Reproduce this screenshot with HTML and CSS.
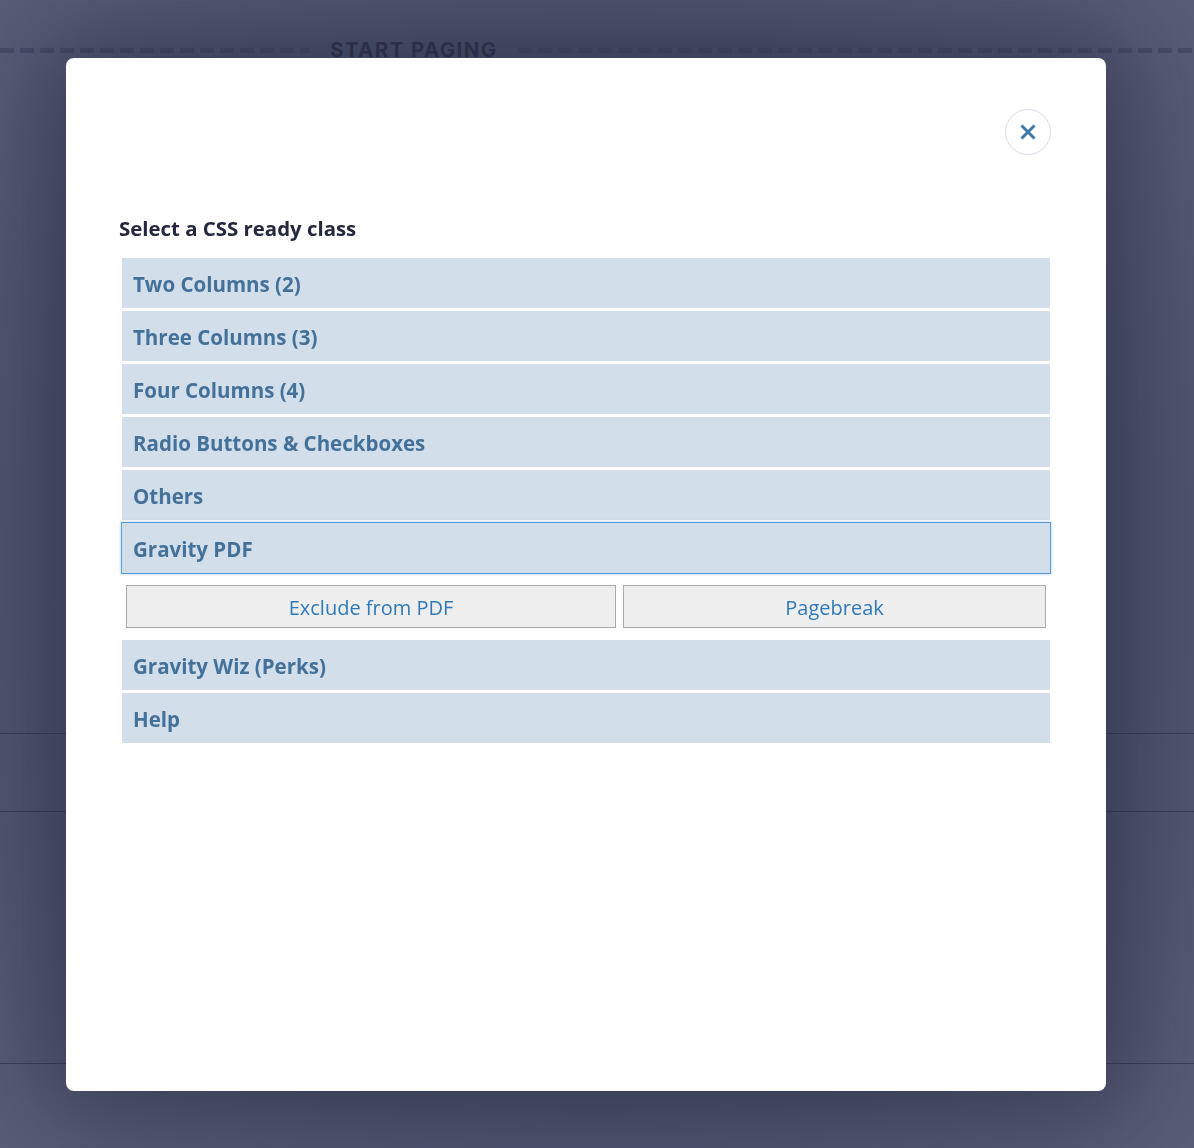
FILE: index.html
```html
<!DOCTYPE html>
<html lang="en">
<head>
    <meta charset="UTF-8">
    <meta name="viewport" content="width=device-width, initial-scale=1.0">
    <title>CSS Ready Classes</title>
    <link rel="stylesheet" href="styles.css">
</head>
<body>
    <div class="editor">
        <div class="page-break">
            <span class="page-break-line"></span>
            <span class="page-break-label">START PAGING</span>
            <span class="page-break-line"></span>
        </div>
        <div class="field-row first"></div>
        <div class="field-row tall"></div>
        <div class="field-row"></div>
    </div>

    <div class="overlay">
        <div class="modal">
            <div class="modal-header">
                <button class="close-btn" aria-label="Close">
                    <svg width="18" height="18" viewBox="0 0 18 18">
                        <path d="M2.5 2.5 L15.5 15.5 M15.5 2.5 L2.5 15.5" stroke="#3b79a6" stroke-width="3" stroke-linecap="butt" fill="none"/>
                    </svg>
                </button>
            </div>

            <h3 class="modal-title">Select a CSS ready class</h3>

            <div class="class-list">
                <div class="class-group">Two Columns (2)</div>
                <div class="class-group">Three Columns (3)</div>
                <div class="class-group">Four Columns (4)</div>
                <div class="class-group">Radio Buttons &amp; Checkboxes</div>
                <div class="class-group">Others</div>
                <div class="class-group active">Gravity PDF</div>
                <div class="class-options">
                    <button class="class-option">Exclude from PDF</button>
                    <button class="class-option">Pagebreak</button>
                </div>
                <div class="class-group">Gravity Wiz (Perks)</div>
                <div class="class-group">Help</div>
            </div>
        </div>
    </div>
</body>
</html>
```

FILE: styles.css
```css
html, body {
    height: 100%;
}

body {
    margin: 0;
    overflow: hidden;
    font-family: "Open Sans", "Noto Sans", sans-serif;
    background: #4d506c;
}

/* form editor behind the dialog */
.editor {
    height: 100%;
    background: radial-gradient(ellipse at 50% 50%, #41455f 0%, #4a4e6a 55%, #5a5d77 100%);
}

.page-break {
    display: flex;
    align-items: center;
    gap: 20px;
    padding-top: 38px;
}

.page-break-line {
    flex: 1;
    height: 5px;
    background: repeating-linear-gradient(90deg, #474a66 0 14px, transparent 14px 20px);
}

.page-break-line:first-child {
    flex: 0 0 310px;
}

.page-break-label {
    font-family: Inter, "Open Sans", sans-serif;
    font-size: 20.5px;
    font-weight: 700;
    letter-spacing: 1.4px;
    color: #2f334b;
    line-height: 24px;
}

.field-row {
    border-top: 1px solid #363b57;
}

.field-row.first {
    margin-top: 671px;
    height: 77px;
}

.field-row.tall {
    height: 251px;
}

/* dialog */
.overlay {
    position: fixed;
    inset: 0;
    padding: 58px 88px 57px 66px;
    display: flex;
}

.modal {
    flex: 1;
    background: #fff;
    border-radius: 8px;
    padding: 51px 53px 0 53px;
    box-shadow: 0 0 90px 20px rgba(35, 40, 66, 0.55);
}

.modal-header {
    display: flex;
    justify-content: flex-end;
    padding-right: 2px;
}

.close-btn {
    width: 46px;
    height: 46px;
    border-radius: 50%;
    border: 1px solid #dcd9ea;
    background: #fff;
    padding: 0;
    display: flex;
    align-items: center;
    justify-content: center;
    cursor: pointer;
}

.modal-title {
    margin: 60px 0 17px;
    font-size: 20.4px;
    font-weight: 700;
    line-height: 26px;
    color: #25273f;
}

.class-list {
    margin: 0 3px;
}

.class-group {
    height: 50px;
    box-sizing: border-box;
    margin-bottom: 3px;
    padding: 2px 0 0 11px;
    display: flex;
    align-items: center;
    background: #d2dfea;
    color: #44719a;
    font-size: 20.5px;
    font-weight: 700;
}

.class-group.active {
    box-shadow: 0 0 0 1px #5c9bd6, 0 0 3px 1px rgba(92, 155, 214, 0.5);
}

.class-options {
    display: grid;
    grid-template-columns: 490px 1fr;
    gap: 7px;
    padding: 9px 4px 12px;
}

.class-option {
    height: 43px;
    padding: 2px 0 0;
    background: #eeeeee;
    border: 1px solid #aaaaaa;
    color: #2f7ab8;
    font-family: inherit;
    font-size: 20px;
    cursor: pointer;
}
```
